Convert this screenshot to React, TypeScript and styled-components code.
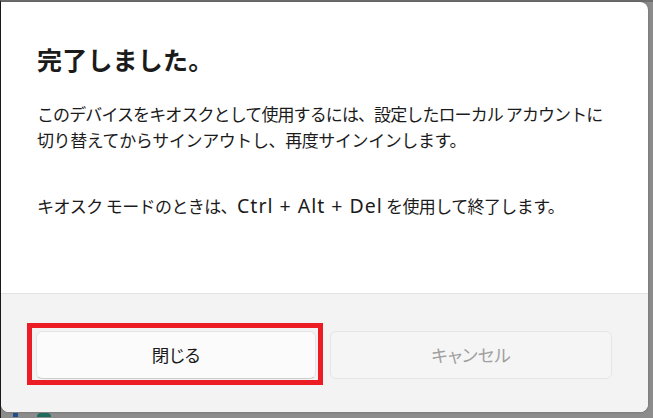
import * as React from "react";
import styled, { createGlobalStyle } from "styled-components";

const GlobalStyle = createGlobalStyle`
  html, body {
    margin: 0;
    padding: 0;
    background: #8a8a8a;
    overflow: hidden;
  }
  body {
    font-family: "Noto Sans CJK JP", sans-serif;
  }
`;

const Screen = styled.div`
  width: 653px;
  height: 418px;
  box-sizing: border-box;
  border-left: 1px solid #1c1c1c;
  border-top: 2px solid #6e6e6e;
  background: #8c8c8c;
`;

const Dialog = styled.div`
  width: 647px;
  height: 410px;
  background: #ffffff;
  border-radius: 0 8px 8px 8px;
  overflow: hidden;
  display: flex;
  flex-direction: column;
  box-shadow: 0 0 3px rgba(0, 0, 0, 0.25);
`;

const Content = styled.div`
  flex: 1;
  padding: 41px 36px 0 36px;
  color: #1b1b1b;
`;

const Title = styled.h1`
  margin: 0 0 26px 0;
  font-size: 25px;
  line-height: 32px;
  font-weight: 700;
  letter-spacing: 0.2px;
`;

// one visual line of body copy; $tracking compensates for the narrower
// proportional kana of the Windows UI font
const Line = styled.p<{ $gap?: number; $tracking?: number }>`
  margin: 0 0 ${(p) => p.$gap ?? 0}px 0;
  font-size: 17px;
  line-height: 26px;
  font-weight: 400;
  white-space: nowrap;
  letter-spacing: ${(p) => p.$tracking ?? 0}px;
`;

const Keys = styled.span`
  font-family: "Noto Sans", "Open Sans", sans-serif;
  font-size: 19.5px;
  line-height: 26px;
  font-weight: 400;
  letter-spacing: 1px;
`;

const Footer = styled.div`
  height: 119px;
  box-sizing: border-box;
  background: #f3f3f3;
  border-top: 1px solid #e3e3e3;
  padding: 37px 36px 0 35px;
  display: grid;
  grid-template-columns: 280px 282px;
  column-gap: 14px;
  align-items: start;
`;

const Highlight = styled.div`
  position: relative;
  &::after {
    content: "";
    position: absolute;
    left: -9px;
    right: -7px;
    top: -8px;
    bottom: -6px;
    border: 5px solid #ec1c24;
    pointer-events: none;
  }
`;

const Button = styled.button<{ $disabled?: boolean }>`
  width: 100%;
  height: 48px;
  box-sizing: border-box;
  border-radius: 6px;
  border: 1px solid #e5e5e5;
  border-bottom-color: ${(p) => (p.$disabled ? "#e5e5e5" : "#cccccc")};
  background: ${(p) => (p.$disabled ? "#f5f5f5" : "#fbfbfb")};
  color: ${(p) => (p.$disabled ? "#a0a0a0" : "#1b1b1b")};
  font-family: "Noto Sans CJK JP", sans-serif;
  font-size: 17.5px;
  font-feature-settings: "palt";
  padding: 0 0 2px 0;
  cursor: default;
`;

const BottomStrip = styled.div`
  display: flex;
  gap: 19px;
  padding: 1px 0 0 12px;
`;

const TaskIcon = styled.span<{ $color: string; $w: number }>`
  display: block;
  width: ${(p) => p.$w}px;
  height: 4px;
  background: ${(p) => p.$color};
  border-radius: ${(p) => (p.$w > 8 ? "6px 6px 0 0" : "0")};
`;

export default function App() {
  return (
    <>
      <GlobalStyle />
      <Screen>
        <Dialog>
          <Content>
            <Title>完了しました。</Title>
            <Line $tracking={-0.9}>
              このデバイスをキオスクとして使用するには、設定したローカル アカウントに
            </Line>
            <Line $tracking={-0.4} $gap={40}>
              切り替えてからサインアウトし、再度サインインします。
            </Line>
            <Line $tracking={-0.6}>
              キオスク モードのときは、<Keys>Ctrl + Alt + Del</Keys> を使用して終了します。
            </Line>
          </Content>
          <Footer>
            <Highlight>
              <Button>閉じる</Button>
            </Highlight>
            <Button $disabled>キャンセル</Button>
          </Footer>
        </Dialog>
        <BottomStrip>
          <TaskIcon $color="#1f4f8a" $w={5} />
          <TaskIcon $color="#1d6a5c" $w={14} />
        </BottomStrip>
      </Screen>
    </>
  );
}
